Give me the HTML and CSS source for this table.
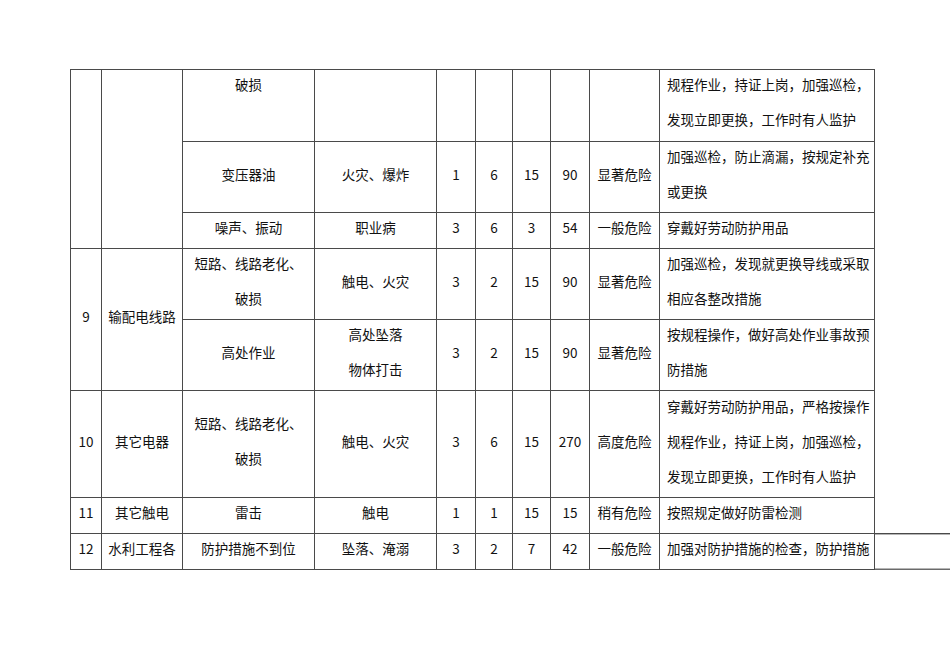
FILE: index.html
```html
<!DOCTYPE html>
<html lang="zh-CN">
<head>
<meta charset="utf-8">
<title>危险源辨识</title>
<link rel="stylesheet" href="styles.css">
</head>
<body>
<table class="risk">
  <colgroup>
    <col class="c-no"><col class="c-name"><col class="c-src"><col class="c-acc">
    <col class="c-n"><col class="c-n2"><col class="c-n3"><col class="c-n"><col class="c-lvl"><col class="c-meas"><col class="c-extra">
  </colgroup>
  <tr class="h72">
    <td rowspan="3"></td>
    <td rowspan="3"></td>
    <td class="top"><span class="t">破损</span></td>
    <td></td><td></td><td></td><td></td><td></td><td></td>
    <td class="meas top"><span class="t">规程作业，持证上岗，加强巡检，</span><br><span class="t">发现立即更换，工作时有人监护</span></td>
    <td class="extra"></td>
  </tr>
  <tr class="h71">
    <td><span class="t">变压器油</span></td><td><span class="t">火灾、爆炸</span></td>
    <td><span class="t">1</span></td><td><span class="t">6</span></td><td><span class="t">15</span></td><td><span class="t">90</span></td><td><span class="t">显著危险</span></td>
    <td class="meas"><span class="t">加强巡检，防止滴漏，按规定补充</span><br><span class="t">或更换</span></td>
    <td class="extra"></td>
  </tr>
  <tr class="h36">
    <td><span class="t">噪声、振动</span></td><td><span class="t">职业病</span></td>
    <td><span class="t">3</span></td><td><span class="t">6</span></td><td><span class="t">3</span></td><td><span class="t">54</span></td><td><span class="t">一般危险</span></td>
    <td class="meas"><span class="t">穿戴好劳动防护用品</span></td>
    <td class="extra"></td>
  </tr>
  <tr class="h71">
    <td rowspan="2"><span class="t">9</span></td>
    <td rowspan="2"><span class="t">输配电线路</span></td>
    <td><span class="t">短路、线路老化、</span><br><span class="t">破损</span></td><td><span class="t">触电、火灾</span></td>
    <td><span class="t">3</span></td><td><span class="t">2</span></td><td><span class="t">15</span></td><td><span class="t">90</span></td><td><span class="t">显著危险</span></td>
    <td class="meas"><span class="t">加强巡检，发现就更换导线或采取</span><br><span class="t">相应各整改措施</span></td>
    <td class="extra"></td>
  </tr>
  <tr class="h71">
    <td><span class="t">高处作业</span></td><td><span class="t">高处坠落</span><br><span class="t">物体打击</span></td>
    <td><span class="t">3</span></td><td><span class="t">2</span></td><td><span class="t">15</span></td><td><span class="t">90</span></td><td><span class="t">显著危险</span></td>
    <td class="meas"><span class="t">按规程操作，做好高处作业事故预</span><br><span class="t">防措施</span></td>
    <td class="extra"></td>
  </tr>
  <tr class="h107">
    <td><span class="t">10</span></td><td><span class="t">其它电器</span></td>
    <td><span class="t">短路、线路老化、</span><br><span class="t">破损</span></td><td><span class="t">触电、火灾</span></td>
    <td><span class="t">3</span></td><td><span class="t">6</span></td><td><span class="t">15</span></td><td><span class="t">270</span></td><td><span class="t">高度危险</span></td>
    <td class="meas"><span class="t">穿戴好劳动防护用品，严格按操作</span><br><span class="t">规程作业，持证上岗，加强巡检，</span><br><span class="t">发现立即更换，工作时有人监护</span></td>
    <td class="extra"></td>
  </tr>
  <tr class="h35">
    <td><span class="t">11</span></td><td><span class="t">其它触电</span></td>
    <td><span class="t">雷击</span></td><td><span class="t">触电</span></td>
    <td><span class="t">1</span></td><td><span class="t">1</span></td><td><span class="t">15</span></td><td><span class="t">15</span></td><td><span class="t">稍有危险</span></td>
    <td class="meas"><span class="t">按照规定做好防雷检测</span></td>
    <td class="extra"></td>
  </tr>
  <tr class="h36">
    <td><span class="t">12</span></td><td><span class="t">水利工程各</span></td>
    <td><span class="t">防护措施不到位</span></td><td><span class="t">坠落、淹溺</span></td>
    <td><span class="t">3</span></td><td><span class="t">2</span></td><td><span class="t">7</span></td><td><span class="t">42</span></td><td><span class="t">一般危险</span></td>
    <td class="meas"><span class="t">加强对防护措施的检查，防护措施</span></td>
    <td class="extra open"></td>
  </tr>
</table>
</body>
</html>
```

FILE: styles.css
```css
html, body {
  margin: 0;
  padding: 0;
  background: #ffffff;
}

body {
  padding: 69px 0 40px 70px;
  font-family: "Noto Sans CJK SC", "Noto Sans", sans-serif;
  font-size: 13.5px;
  color: #111111;
}

.risk {
  border-collapse: collapse;
  table-layout: fixed;
  width: 880px;
}

.c-no { width: 31px; }
.c-name { width: 81px; }
.c-src { width: 132px; }
.c-acc { width: 122px; }
.c-n { width: 39px; }
.c-n2 { width: 37px; }
.c-n3 { width: 38px; }
.c-lvl { width: 70px; }
.c-meas { width: 215px; }
.c-extra { width: 76px; }

.risk td {
  border: 1px solid #4a4a4a;
  padding: 0 2px;
  line-height: 35px;
  text-align: center;
  vertical-align: middle;
  white-space: nowrap;
  overflow: hidden;
}

.risk .t {
  line-height: 14px;
  vertical-align: 3px;
}

.risk td.top {
  vertical-align: top;
}

.risk td.meas {
  text-align: left;
  padding: 0 4px 0 7px;
}

.risk td.extra {
  border: none;
}

.risk .h36 td.extra.open {
  border-top: 1px solid #4a4a4a;
  border-bottom: 1px solid #6a6a6a;
  background: linear-gradient(to top, #6a6a6a 0, #6a6a6a 1px, transparent 1px);
}

.h72 { height: 72px; }
.h71 { height: 71px; }
.h36 { height: 36px; }
.h35 { height: 35px; }
.h107 { height: 107px; }
```
